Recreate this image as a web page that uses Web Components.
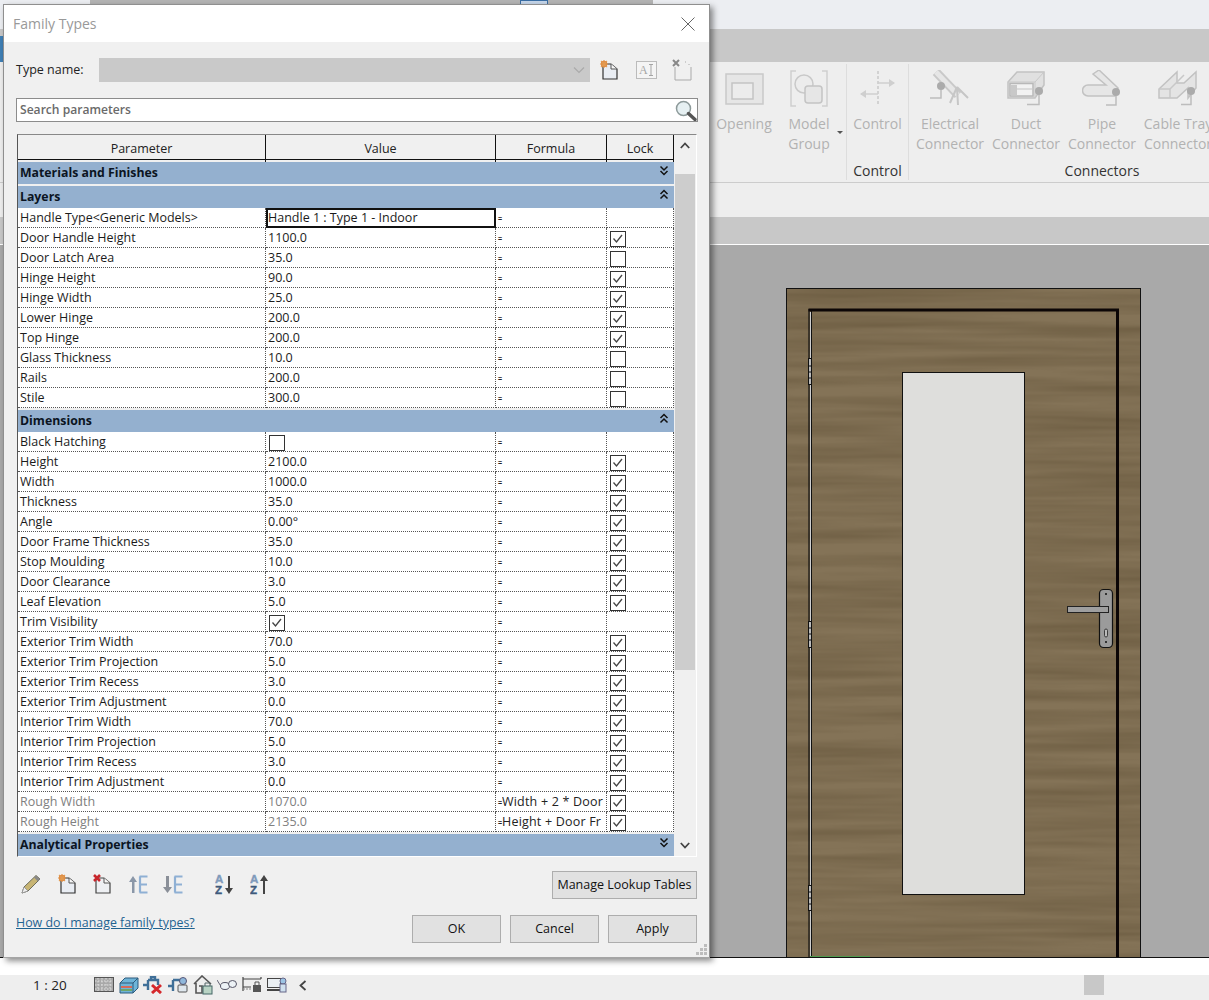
<!DOCTYPE html>
<html lang="en"><head><meta charset="utf-8"><title>Family Types</title>
<style>html,body{margin:0;padding:0;background:#eee;font-family:"Open Sans","Noto Sans",sans-serif}</style></head>
<body>
<x-desktop>
  <top-strip slot="chrome"></top-strip>
  <rb-ribbon slot="chrome">
    <rb-panel width="130" start>
      <rb-tool width="56" icon="opening">Opening</rb-tool>
      <rb-tool width="74" icon="group" arrow>Model<br>Group</rb-tool>
    </rb-panel>
    <rb-panel width="61" title="Control"><rb-tool width="61" icon="control">Control</rb-tool></rb-panel>
    <rb-panel width="386" title="Connectors" pad>
      <rb-tool width="76" icon="elec">Electrical<br>Connector</rb-tool>
      <rb-tool width="76" icon="duct">Duct<br>Connector</rb-tool>
      <rb-tool width="76" icon="pipe">Pipe<br>Connector</rb-tool>
      <rb-tool width="76" icon="tray">Cable Tray<br>Connector</rb-tool>
    </rb-panel>
  </rb-ribbon>
  <door-canvas slot="chrome"></door-canvas>
  <status-bar slot="chrome"></status-bar>
  <family-dialog slot="window">
    <ft-group dir="down">Materials and Finishes</ft-group>
    <ft-group dir="up">Layers</ft-group>
    <ft-row value="Handle 1 : Type 1 - Indoor" selected>Handle Type&lt;Generic Models&gt;</ft-row>
    <ft-row value="1100.0" lock="on">Door Handle Height</ft-row>
    <ft-row value="35.0" lock="off">Door Latch Area</ft-row>
    <ft-row value="90.0" lock="on">Hinge Height</ft-row>
    <ft-row value="25.0" lock="on">Hinge Width</ft-row>
    <ft-row value="200.0" lock="on">Lower Hinge</ft-row>
    <ft-row value="200.0" lock="on">Top Hinge</ft-row>
    <ft-row value="10.0" lock="off">Glass Thickness</ft-row>
    <ft-row value="200.0" lock="off">Rails</ft-row>
    <ft-row value="300.0" lock="off">Stile</ft-row>
    <ft-group dir="up">Dimensions</ft-group>
    <ft-row check="off">Black Hatching</ft-row>
    <ft-row value="2100.0" lock="on">Height</ft-row>
    <ft-row value="1000.0" lock="on">Width</ft-row>
    <ft-row value="35.0" lock="on">Thickness</ft-row>
    <ft-row value="0.00°" lock="on">Angle</ft-row>
    <ft-row value="35.0" lock="on">Door Frame Thickness</ft-row>
    <ft-row value="10.0" lock="on">Stop Moulding</ft-row>
    <ft-row value="3.0" lock="on">Door Clearance</ft-row>
    <ft-row value="5.0" lock="on">Leaf Elevation</ft-row>
    <ft-row check="on">Trim Visibility</ft-row>
    <ft-row value="70.0" lock="on">Exterior Trim Width</ft-row>
    <ft-row value="5.0" lock="on">Exterior Trim Projection</ft-row>
    <ft-row value="3.0" lock="on">Exterior Trim Recess</ft-row>
    <ft-row value="0.0" lock="on">Exterior Trim Adjustment</ft-row>
    <ft-row value="70.0" lock="on">Interior Trim Width</ft-row>
    <ft-row value="5.0" lock="on">Interior Trim Projection</ft-row>
    <ft-row value="3.0" lock="on">Interior Trim Recess</ft-row>
    <ft-row value="0.0" lock="on">Interior Trim Adjustment</ft-row>
    <ft-row value="1070.0" formula="Width + 2 * Door" lock="on" muted>Rough Width</ft-row>
    <ft-row value="2135.0" formula="Height + Door Fr" lock="on" muted>Rough Height</ft-row>
    <ft-group dir="down">Analytical Properties</ft-group>
  </family-dialog>
</x-desktop>
<script>
const FONT='"Open Sans","Noto Sans",sans-serif';
function el(name,html){customElements.define(name,class extends HTMLElement{
  constructor(){super();this.attachShadow({mode:'open'});}
  connectedCallback(){this.shadowRoot.innerHTML=typeof html==='function'?html(this):html;}
});}
const ICONS={
 opening:`<svg width="40" height="38" viewBox="0 0 40 38"><rect x="2" y="4" width="37" height="30" fill="#e6e6e6" stroke="#c9c9c9" stroke-width="1.5"/><rect x="8" y="13" width="21" height="16" fill="#ececec" stroke="#c4c4c4" stroke-width="1.5"/></svg>`,
 group:`<svg width="40" height="38" viewBox="0 0 40 38"><path d="M7 1H2V36H7M33 1H38V36H33" fill="none" stroke="#cfcfcf" stroke-width="1.5"/><circle cx="15" cy="14" r="9" fill="#ececec" stroke="#c9c9c9" stroke-width="1.5"/><rect x="16" y="16" width="17" height="17" rx="3" fill="#e6e6e6" stroke="#c4c4c4" stroke-width="1.5"/></svg>`,
 control:`<svg width="40" height="38" viewBox="0 0 40 38"><path d="M20 1V36" stroke="#c9c9c9" stroke-width="1.5" stroke-dasharray="3 2" fill="none"/><path d="M20 13H36M3 24H20" stroke="#d0d0d0" stroke-width="1.5" fill="none"/><path d="M31 9L37 13L31 17ZM8 20L2 24L8 28Z" fill="#cfcfcf"/></svg>`,
 elec:`<svg width="40" height="38" viewBox="0 0 40 38"><path d="M6 2L28 25" stroke="#c9c9c9" stroke-width="9" fill="none"/><path d="M6 2L28 25" stroke="#e6e6e6" stroke-width="5" fill="none"/><path d="M27 17L20 33M27 17L28 35M27 17L38 28" stroke="#c6c6c6" stroke-width="2" fill="none"/><circle cx="11" cy="16" r="4" fill="#ababab"/><path d="M11 20V28H0" stroke="#bdbdbd" stroke-width="1.5" fill="none"/></svg>`,
 duct:`<svg width="40" height="38" viewBox="0 0 40 38"><path d="M2 12L11 2H38V15L29 28H2Z" fill="#e0e0e0" stroke="#c2c2c2" stroke-width="1.5"/><path d="M2 12H29V28M29 12L38 2" fill="none" stroke="#c8c8c8"/><rect x="4" y="13.5" width="23" height="12.5" fill="#f2f2f2" stroke="#b8b8b8" stroke-width="1.5"/><rect x="5" y="15" width="6" height="10" fill="#c9c9c9"/><path d="M11 19H26" stroke="#c4c4c4"/><circle cx="33" cy="21" r="4" fill="#ababab"/><path d="M33 25V34.5H21" stroke="#bdbdbd" stroke-width="1.5" fill="none"/></svg>`,
 pipe:`<svg width="40" height="38" viewBox="0 0 40 38"><path d="M6 15H24L11 4L17 0L36 18L33 26H6A5.5 5.5 0 0 1 6 15Z" fill="#e6e6e6" stroke="#c2c2c2" stroke-width="1.5"/><circle cx="34" cy="22" r="4" fill="#ababab"/><path d="M34 26V35H24" stroke="#bdbdbd" stroke-width="1.5" fill="none"/></svg>`,
 tray:`<svg width="40" height="38" viewBox="0 0 40 38"><path d="M1 19L19 2V13H26L38 2V18L30 28V18L19 28H1Z" fill="#e4e4e4" stroke="#c2c2c2" stroke-width="1.5"/><path d="M1 19H12V28M12 19L26 5" fill="none" stroke="#c8c8c8" stroke-width="1.5"/><circle cx="33" cy="21" r="4" fill="#ababab"/><path d="M33 25V34.5H23" stroke="#bdbdbd" stroke-width="1.5" fill="none"/></svg>`,
 docNew:`<svg width="20" height="20" viewBox="0 0 20 20"><path d="M4 4H12L18 9V19H4Z" fill="#e9edf3" stroke="#333" stroke-width="1.2"/><path d="M12 4V9H18" fill="#f7f7f7" stroke="#555"/><circle cx="5" cy="4" r="3.2" fill="#d9803a"/><path d="M5 0V8M1 4H9M2 1L8 7M8 1L2 7" stroke="#e39a50" stroke-width="1.1"/></svg>`,
 docDel:`<svg width="20" height="20" viewBox="0 0 20 20"><path d="M4 4H12L18 9V19H4Z" fill="#eef0f3" stroke="#444" stroke-width="1.2"/><path d="M12 4V9H18" fill="#f7f7f7" stroke="#555"/><path d="M2 1L8 7M8 1L2 7" stroke="#c8262c" stroke-width="2.6"/></svg>`,
 docOff:`<svg width="22" height="22" viewBox="0 0 22 22"><path d="M4 8V21H20V8M14 3H15M18 5V6" fill="none" stroke="#aaa"/><path d="M2 1L8 7M8 1L2 7" stroke="#888" stroke-width="2"/></svg>`,
 rename:`<svg width="22" height="18" viewBox="0 0 22 18"><rect x=".5" y=".5" width="20" height="17" fill="#f4f4f4" stroke="#bbb"/><text x="3" y="13" font-family="Liberation Serif" font-size="12" fill="#a5a5a5">A</text><path d="M13 3.5H17M15 3.5V14.5M13 14.5H17" stroke="#a5a5a5" fill="none"/></svg>`,
 pencil:`<svg width="20" height="20" viewBox="0 0 20 20"><path d="M1 19L3 13L15 1.5L19 5L7 17Z" fill="#c8b574" stroke="#6c6c5c"/><path d="M13 3.5L17 7.5L19 5L15 1.5Z" fill="#888"/><path d="M1 19L3 13L7 17Z" fill="#eee" stroke="#999"/></svg>`,
 up:`<svg width="22" height="20" viewBox="0 0 22 20"><path d="M5 19V8H2L6 2L10 8H7.5V19Z" fill="#8a97a8"/><path d="M12.5 2.5H20.5M13 2.5V18.5M12.5 10.5H20M12.5 18.5H20.5" fill="none" stroke="#8fb0d4" stroke-width="2.2"/></svg>`,
 down:`<svg width="22" height="20" viewBox="0 0 22 20"><path d="M4 2V13H1L5.5 19L10 13H7V2Z" fill="#8a8f98"/><path d="M12.5 2.5H20.5M13 2.5V18.5M12.5 10.5H20M12.5 18.5H20.5" fill="none" stroke="#8fb0d4" stroke-width="2.2"/></svg>`,
 az:`<svg width="20" height="22" viewBox="0 0 20 22"><text x="0" y="10" font-family="Liberation Sans" font-weight="700" font-size="11.5" fill="#7f9abb" stroke="#7f9abb" stroke-width=".4">A</text><text x="0" y="21" font-family="Liberation Sans" font-weight="700" font-size="11.5" fill="#3e5a7c" stroke="#3e5a7c" stroke-width=".4">Z</text><path d="M14 3V17" stroke="#444" stroke-width="2"/><path d="M10 15H18L14 21Z" fill="#444"/></svg>`,
 za:`<svg width="20" height="22" viewBox="0 0 20 22"><text x="0" y="10" font-family="Liberation Sans" font-weight="700" font-size="11.5" fill="#7f9abb" stroke="#7f9abb" stroke-width=".4">A</text><text x="0" y="21" font-family="Liberation Sans" font-weight="700" font-size="11.5" fill="#3e5a7c" stroke="#3e5a7c" stroke-width=".4">Z</text><path d="M14 6V21" stroke="#444" stroke-width="2"/><path d="M10 8H18L14 2Z" fill="#444"/></svg>`,
 lens:`<svg width="22" height="21" viewBox="0 0 22 21"><circle cx="8.5" cy="8.5" r="7" fill="#e6f0f2" stroke="#8d9a9a" stroke-width="1.5"/><path d="M13.5 13.5L20 19.5" stroke="#555" stroke-width="3.4" stroke-linecap="round"/></svg>`,
 close:`<svg width="14" height="14" viewBox="0 0 14 14"><path d="M.5.5L13.5 13.5M13.5.5L.5 13.5" stroke="#666" fill="none"/></svg>`,
 s1:`<svg width="20" height="18" viewBox="0 0 20 18"><rect x=".5" y="1.5" width="19" height="14" fill="#a9a9a9" stroke="#555"/><path d="M1 5H19M1 9H19M1 13H19M4 2V15M8 2V15M12 2V15M16 2V15" stroke="#e2e2e2" stroke-dasharray="1.5 1.5"/></svg>`,
 s2:`<svg width="20" height="18" viewBox="0 0 20 18"><path d="M1 7L6 2H19V12L14 17H1Z" fill="#6fb4d8" stroke="#2c5b7c"/><path d="M1 7H14V17M14 7L19 2" fill="none" stroke="#2c5b7c"/><path d="M2 11H13" stroke="#d56a5a" stroke-width="2"/><path d="M2 14H13" stroke="#6ea56a" stroke-width="2"/></svg>`,
 s3:`<svg width="20" height="18" viewBox="0 0 20 18"><path d="M0 9H5M5 4H15V9M8 4V1H12V4M5 4V14" stroke="#3f6f98" stroke-width="2.4" fill="none"/><path d="M9 9L18 17M18 9L9 17" stroke="#d5282c" stroke-width="3"/></svg>`,
 s4:`<svg width="20" height="18" viewBox="0 0 20 18"><path d="M0 10H5M5 4H14M5 4V15" stroke="#3f6f98" stroke-width="2.4" fill="none"/><circle cx="15" cy="5" r="3.5" fill="#8fb8dc" stroke="#557"/><rect x="10" y="9" width="9" height="7" rx="1" fill="#dfe7ee" stroke="#555"/></svg>`,
 s5:`<svg width="20" height="20" viewBox="0 0 20 20"><path d="M1 9L9 1L18 9M3 8V18H9V11H6" fill="none" stroke="#555" stroke-width="1.6"/><rect x="10" y="11" width="9" height="8" fill="#b9d3c4" stroke="#466"/><path d="M12 11V8H17V11" fill="none" stroke="#566"/></svg>`,
 s6:`<svg width="20" height="16" viewBox="0 0 20 16"><path d="M0 3L5 11" stroke="#667" fill="none"/><ellipse cx="8" cy="9" rx="4.5" ry="3.5" fill="#edf2f6" stroke="#556"/><ellipse cx="15.5" cy="7" rx="4" ry="3.5" fill="#edf2f6" stroke="#556"/></svg>`,
 s7:`<svg width="20" height="18" viewBox="0 0 20 18"><path d="M1 1V15M19 1V3M1 3H19M1 11H9" stroke="#444" stroke-width="1.2" fill="none"/><path d="M1 13H9" stroke="#888" stroke-dasharray="2 1"/><rect x="11" y="9" width="8" height="7" fill="#555"/><path d="M13 9V6H17V9" fill="none" stroke="#555"/></svg>`,
 s8:`<svg width="20" height="16" viewBox="0 0 20 16"><rect x=".5" y="1.5" width="13" height="9" fill="#e9eef2" stroke="#444"/><path d="M0 13H14" stroke="#444" stroke-width="2"/><circle cx="16" cy="4" r="3" fill="#9cc4e4" stroke="#668"/><rect x="13" y="7" width="6" height="8" fill="#cfe0ee" stroke="#668"/></svg>`
};
const chev=(d,c='#111')=>`<svg width="10" height="11" viewBox="0 0 10 11"><path d="${d==='up'?'M1.5 5L5 1.5L8.5 5M1.5 9.5L5 6L8.5 9.5':'M1.5 1.5L5 5L8.5 1.5M1.5 6L5 9.5L8.5 6'}" fill="none" stroke="${c}" stroke-width="1.5"/></svg>`;

el('x-desktop',`<style>:host{display:block;position:relative;width:1209px;height:1000px;overflow:hidden;background:#eee}
.flow{display:flex;flex-direction:column;height:100%}</style>
<div class="flow"><slot name="chrome"></slot></div><slot name="window"></slot>`);

el('top-strip',`<style>:host{display:block;height:62px;background:linear-gradient(#eceef2 0 29px,#c8c8c8 29px);position:relative;overflow:hidden}
.blue{display:block;width:3px;height:26px;margin-top:36px;background:#3f7fb5}
.row{position:absolute;left:0;right:0;top:0;height:5px;display:flex}
.g{margin-left:90px;width:563px;background:#b4b4b4;position:relative}
.b{position:absolute;left:430px;width:28px;height:5px;top:0;background:#c6d6ea;border:1px solid #3a6ea5;box-sizing:border-box}</style>
<div class="row"><div class="g"><div class="b"></div></div></div><span class="blue"></span>`);

el('rb-ribbon',`<style>:host{display:flex;height:120px;box-sizing:border-box;background:#eee;overflow:hidden;flex:none}</style><slot></slot>`);
el('rb-panel',h=>`<style>:host{display:flex;flex-direction:column;flex:none;width:${h.getAttribute('width')}px;box-sizing:content-box;margin-left:${h.hasAttribute('start')?716:0}px;border-right:1px solid #ddd;height:116px;margin-top:2px}
.t{flex:1;display:flex;padding-left:${h.hasAttribute('pad')?3:0}px}
.n{text-align:center;font:14px/22px ${FONT};color:#333;height:22px;position:relative;top:2px}</style>
<div class="t"><slot></slot></div><div class="n">${h.getAttribute('title')||''}</div>`);
el('rb-tool',h=>`<style>:host{display:block;flex:none;width:${h.getAttribute('width')}px;text-align:center;position:relative;color:#b2b2b2;font:14px/20px ${FONT};white-space:nowrap}
.i{height:38px;margin-top:6px;display:flex;justify-content:center}
.l{margin-top:6px}
.a{position:absolute;right:3px;top:67px;width:0;height:0;border:3px solid transparent;border-top:3px solid #555}</style>
<div class="i">${ICONS[h.getAttribute('icon')]}</div><div class="l"><slot></slot></div>${h.hasAttribute('arrow')?'<span class="a"></span>':''}`);

el('door-canvas',`<style>:host{display:block;flex:none;height:793px;background:linear-gradient(#eee 0 34px,#c8c8c8 34px 61px,#fff 61px 63px,transparent 63px);box-sizing:border-box;border-top:1px solid #ccc}
svg{display:block}</style>
<svg width="1209" height="792" viewBox="0 183 1209 792">
<defs><filter id="w" x="0" y="0" width="100%" height="100%" color-interpolation-filters="sRGB">
<feTurbulence type="fractalNoise" baseFrequency="0.004 0.09" numOctaves="3" seed="7"/>
<feColorMatrix values="0 0 0 0 .3  0 0 0 0 .24  0 0 0 0 .14  .6 0 0 0 -.17"/>
<feMerge><feMergeNode in="SourceGraphic"/><feMergeNode/></feMerge></filter></defs>
<rect x="0" y="245" width="1209" height="712" fill="#a9a9a9"/>
<rect x="0" y="957.5" width="1209" height="17.5" fill="#fff"/>
<rect x="786.5" y="288.5" width="354" height="668.5" fill="#847357" filter="url(#w)"/>
<rect x="786.5" y="288.5" width="354" height="669" fill="none" stroke="#111"/>
<path d="M809 957V309" fill="none" stroke="#111" stroke-width="1.2"/>
<path d="M810.5 957V312" stroke="#cfcfcf" stroke-width="1"/>
<path d="M811.5 957V311" stroke="#111" stroke-width="1"/>
<path d="M808.5 310H1117.5V957" fill="none" stroke="#0c0606" stroke-width="3"/>
<rect x="902.5" y="372.5" width="122" height="522" fill="#dededc" stroke="#111"/>
<g fill="#bbb" stroke="#111"><rect x="808.5" y="358.5" width="3" height="26"/><rect x="808.5" y="621.5" width="3" height="26"/><rect x="808.5" y="885.5" width="3" height="25"/></g>
<path d="M808 366H812M808 372H812M808 378H812M808 628H812M808 634H812M808 640H812M808 892H812M808 898H812M808 904H812" stroke="#111"/>
<rect x="1099.5" y="589.5" width="13" height="58" rx="4" fill="#9b9b9b" stroke="#111" stroke-width="1.2"/>
<rect x="1067.5" y="606.5" width="41" height="6" fill="#9f9f9f" stroke="#222"/>
<circle cx="1106" cy="594" r="1" fill="#111"/><rect x="1104.5" y="629" width="3" height="8" rx="1.5" fill="#bbb" stroke="#222" stroke-width=".8"/><circle cx="1106" cy="642" r="1" fill="#111"/>
<path d="M0 957.5H1209" stroke="#111"/><path d="M810 956.5H870" stroke="#4d9a4d"/>
</svg>`);

el('status-bar',h=>`<style>:host{display:block;flex:none;height:20px;background:#eee;position:relative;font:13.5px/20px ${FONT};color:#222}
.w{display:flex;align-items:center;height:20px;padding-left:33px}
.s{width:61px;flex:none}
.i{width:24.7px;display:flex;justify-content:flex-start;flex:none}
.c{margin-left:7px;display:flex}
.th{position:absolute;left:1084px;top:0;width:20px;height:20px;background:#c8c8c8}</style>
<div class="w"><span class="s">1 : 20</span>${['s1','s2','s3','s4','s5','s6','s7','s8'].map(k=>`<span class="i">${ICONS[k]}</span>`).join('')}
<span class="c"><svg width="8" height="11" viewBox="0 0 8 11"><path d="M6.5 1L1.5 5.5L6.5 10" fill="none" stroke="#444" stroke-width="1.8"/></svg></span></div><div class="th"></div>`);

el('ft-group',h=>`<style>:host{display:flex;align-items:center;justify-content:space-between;height:22px;margin-top:2px;background:#94b0cf;font:700 12.3px/24px ${FONT};color:#0b1422;padding:0 5px 0 2px;box-sizing:border-box}
.c{margin-top:-6px;display:flex}</style><span><slot></slot></span><span class="c">${chev(h.getAttribute('dir'))}</span>`);

el('ft-check',h=>`<style>:host{display:inline-block;width:16px;height:16px;box-sizing:border-box;border:1.5px solid #333;background:#fff}
svg{display:block}</style>${h.hasAttribute('on')?`<svg width="13" height="13" viewBox="0 0 13 13"><path d="M2.5 6.5L5.5 10L11 3" fill="none" stroke="#444" stroke-width="1.3"/></svg>`:''}`);

el('ft-row',h=>{const m=h.hasAttribute('muted'),f=h.getAttribute('formula')||'',l=h.getAttribute('lock'),c=h.getAttribute('check');
return `<style>:host{display:grid;grid-template-columns:248px 230px 111px 67px;height:20px;background:#fff;font:12.5px/20px ${FONT};color:${m?'#808080':'#1b1b1b'}}
.c{box-sizing:border-box;height:20px;border-right:1px dotted #555;border-bottom:1px dotted #555;overflow:hidden;white-space:nowrap}
.n{padding-left:2px}.v{padding-left:2px;position:relative}
.sel{outline:2px solid #111;outline-offset:-2px;border:0}
.cb{display:flex;align-items:flex-start;padding:3px 0 0 3px}
.f{display:flex}.eq{font:700 7px/21px "Liberation Sans",sans-serif;width:6px;padding-left:2px;box-sizing:border-box;flex:none;color:#222}
.fx{overflow:hidden;width:102px;flex:none;color:#222;letter-spacing:.2px}
.lk{padding:3px 0 0 3px}</style>
<div class="c n"><slot></slot></div>
<div class="c ${h.hasAttribute('selected')?'sel':''} ${c?'cb':'v'}">${c?`<ft-check ${c==='on'?'on':''}></ft-check>`:(h.getAttribute('value')||'')}</div>
<div class="c f"><span class="eq">=</span><span class="fx">${f}</span></div>
<div class="c lk">${l?`<ft-check ${l==='on'?'on':''}></ft-check>`:''}</div>`});

el('ft-head',`<style>:host{display:grid;grid-template-columns:248px 230px 111px 67px;height:25px;background:#f0f0f0;font:12.5px/27px ${FONT};color:#222;box-sizing:border-box;border-bottom:1px solid #111;text-align:center}
div{border-right:1px solid #111;box-sizing:border-box}</style><div>Parameter</div><div>Value</div><div>Formula</div><div>Lock</div>`);

el('ft-scroll',`<style>:host{display:flex;flex-direction:column;width:20px;margin-left:1px;flex:none;background:#f0f0f0}
.a{display:flex;justify-content:center;align-items:center;flex:none}
.top{height:39px;align-items:flex-start;padding-top:7px;box-sizing:border-box}
.th{height:496px;background:#cdcdcd;flex:none}
.sp{flex:1}.bot{height:22px}</style>
<div class="a top"><svg width="10" height="7" viewBox="0 0 10 7"><path d="M.8 6L5 1.5L9.2 6" fill="none" stroke="#444" stroke-width="1.8"/></svg></div><div class="th"></div><div class="sp"></div>
<div class="a bot"><svg width="10" height="7" viewBox="0 0 10 7"><path d="M.8 1L5 5.5L9.2 1" fill="none" stroke="#444" stroke-width="1.8"/></svg></div>`);

el('dlg-button',h=>`<style>:host{display:inline-flex;align-items:center;justify-content:center;box-sizing:border-box;height:28px;width:${h.getAttribute('width')||89}px;background:#e1e1e1;border:1px solid #adadad;font:12.5px/20px ${FONT};color:#111;flex:none}</style><slot></slot>`);

el('ic-glyph',h=>`<style>:host{display:inline-flex;flex:none;line-height:0}</style>${ICONS[h.getAttribute('name')]}`);

el('family-dialog',`<style>:host{display:flex;flex-direction:column;position:absolute;left:3px;top:4px;width:707px;height:954px;box-sizing:border-box;background:#f0f0f0;border:1px solid #8f8f8f;border-bottom-color:#a5a5a5;box-shadow:3px 3px 6px rgba(0,0,0,.45);font:12.5px/18px ${FONT};color:#222}
.title{height:37px;background:#fff;display:flex;align-items:center;justify-content:space-between;padding:0 14px 0 9px;font:14px/20px ${FONT};color:#999;flex:none}
.type{display:flex;align-items:center;height:24px;margin:16px 0 0 12px;flex:none}
.lbl{width:83px;flex:none}
.combo{width:491px;height:24px;background:#c9c9c9;flex:none;display:flex;justify-content:flex-end;align-items:center;padding-right:5px;box-sizing:border-box}
.tools{display:flex;align-items:center}
.search{display:flex;align-items:center;justify-content:space-between;height:24px;margin:16px 11px 0 12px;background:#fff;border:1px solid #8c8c8c;box-sizing:border-box;padding:0 0 0 3px;font:600 12.1px/18px ${FONT};color:#6a6a6a;flex:none}
.search span{margin-top:-1px}
.table{display:flex;height:723px;margin:12px 12px 0 13px;box-sizing:border-box;border-left:1px solid #555;border-top:1px solid #888;flex:none;background:#f0f0f0;border-bottom:1px solid #fff;border-right:1px solid #fff}
.grid{width:656px;flex:none;display:flex;flex-direction:column}
.rows{display:flex;flex-direction:column}
.foot1{display:flex;align-items:center;justify-content:space-between;height:28px;margin:14px 12px 0 17px;flex:none}
.ic{display:flex;align-items:center;margin-top:-2px}
.foot2{display:flex;justify-content:space-between;align-items:flex-start;height:28px;margin:16px 12px 0 12px;flex:none}
a{color:#1f6391;text-decoration:underline;font:12.4px/18px ${FONT};margin-top:-1px;white-space:nowrap}
.btns{display:flex;gap:9px}
.grip{position:absolute;right:1px;bottom:1px}</style>
<div class="title"><span>Family Types</span><ic-glyph name="close"></ic-glyph></div>
<div class="type"><span class="lbl">Type name:</span><div class="combo"><svg width="12" height="8" viewBox="0 0 12 8"><path d="M1 1.5L6 6.5L11 1.5" fill="none" stroke="#aaa" stroke-width="1.2"/></svg></div>
<div class="tools"><ic-glyph name="docNew" style="margin-left:9px"></ic-glyph><ic-glyph name="rename" style="margin-left:17px"></ic-glyph><ic-glyph name="docOff" style="margin-left:13px"></ic-glyph></div></div>
<div class="search"><span>Search parameters</span><ic-glyph name="lens"></ic-glyph></div>
<div class="table"><div class="grid"><ft-head></ft-head><div class="rows"><slot></slot></div></div><ft-scroll></ft-scroll></div>
<div class="foot1"><div class="ic"><ic-glyph name="pencil"></ic-glyph><ic-glyph name="docNew" style="margin-left:16px"></ic-glyph><ic-glyph name="docDel" style="margin-left:15px"></ic-glyph><ic-glyph name="up" style="margin-left:15px"></ic-glyph><ic-glyph name="down" style="margin-left:13px"></ic-glyph><ic-glyph name="az" style="margin-left:31px"></ic-glyph><ic-glyph name="za" style="margin-left:15px"></ic-glyph></div><dlg-button width="145">Manage Lookup Tables</dlg-button></div>
<div class="foot2"><a href="#">How do I manage family types?</a><div class="btns"><dlg-button>OK</dlg-button><dlg-button>Cancel</dlg-button><dlg-button>Apply</dlg-button></div></div>
<svg class="grip" width="12" height="12" viewBox="0 0 12 12" fill="#bdbdbd"><rect x="8" y="0" width="3" height="3"/><rect x="4" y="4" width="3" height="3"/><rect x="8" y="4" width="3" height="3"/><rect x="0" y="8" width="3" height="3"/><rect x="4" y="8" width="3" height="3"/><rect x="8" y="8" width="3" height="3"/></svg>`);
</script>
</body></html>
